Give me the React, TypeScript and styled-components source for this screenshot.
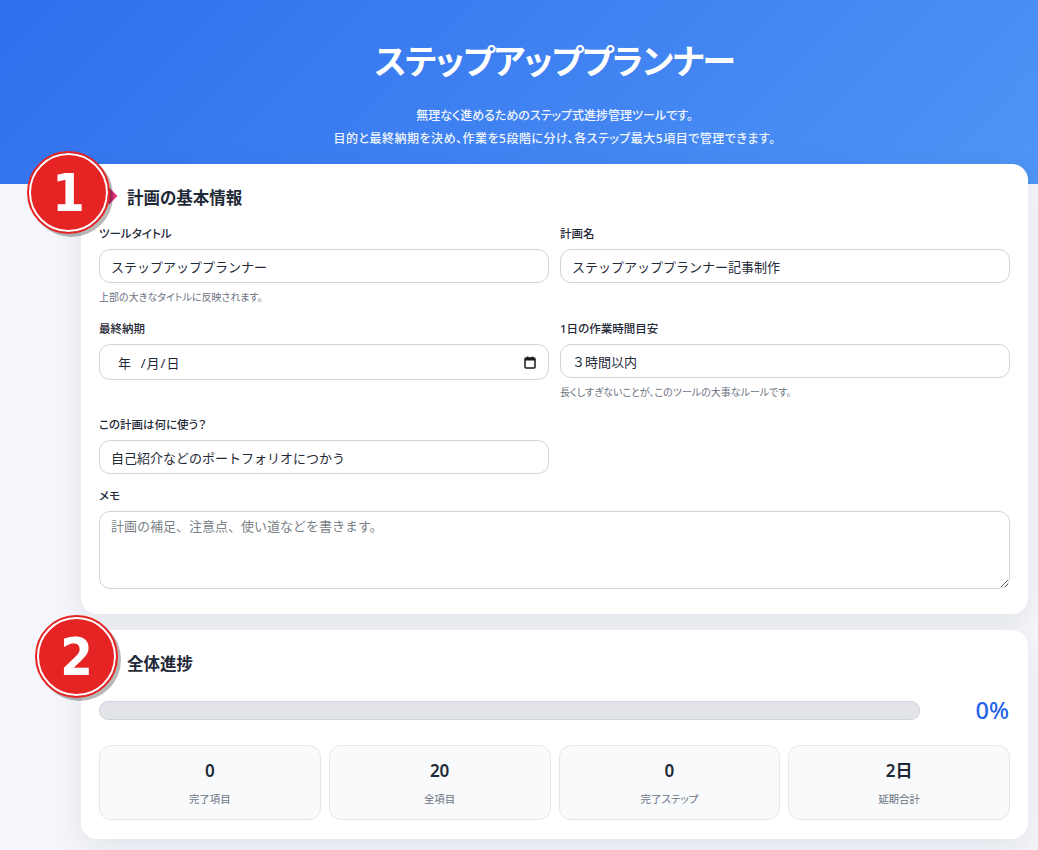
import React from 'react';
import styled, { createGlobalStyle } from 'styled-components';

const FONT = '"Noto Sans", "Noto Sans CJK JP", sans-serif';

const GlobalStyle = createGlobalStyle`
  * { box-sizing: border-box; }
  html, body { margin: 0; height: 850px; overflow: hidden; }
  body { background: #f4f6fb; color: #1f2937; font-family: ${FONT}; }
`;

const Hero = styled.header`
  height: 184px;
  padding: 36px 10px 0 81px;
  background: linear-gradient(135deg, #2f6fed 0%, #4f94f5 100%);
  color: #fff;
  text-align: center;
`;

const Title = styled.h1`
  margin: 0 0 18px;
  font-size: 34px;
  line-height: 50px;
  font-weight: 600;
  letter-spacing: -1.1px;
  font-feature-settings: 'palt';
`;

const Lead = styled.p<{ $tracking?: number }>`
  margin: 0;
  font-size: 12px;
  line-height: 23px;
  font-weight: 500;
  letter-spacing: ${(p) => p.$tracking ?? 0}px;
  color: #f1f6ff;
  font-feature-settings: 'palt';
`;

const Main = styled.main`
  display: flex;
  flex-direction: column;
  gap: 16px;
  margin-top: -20px;
  padding: 0 10px 0 81px;
`;

const Card = styled.section<{ $bottom: number }>`
  position: relative;
  padding: 18px 18px ${(p) => p.$bottom}px;
  background: #fff;
  border-radius: 16px;
  box-shadow: 0 10px 30px rgba(15, 23, 42, 0.08);
`;

const Badge = styled.span<{ $left: number; $top: number }>`
  position: absolute;
  left: ${(p) => p.$left}px;
  top: ${(p) => p.$top}px;
  z-index: 2;
  display: flex;
  align-items: center;
  justify-content: center;
  width: 79px;
  height: 79px;
  border-radius: 50%;
  background: #e62424;
  border: 2px solid #fff;
  outline: 2px solid #e62424;
  box-shadow: 3px 3px 0 2px rgba(0, 0, 0, 0.28);
  color: #fff;
  font-family: 'DejaVu Sans', sans-serif;
  font-stretch: condensed;
  font-size: 52px;
  line-height: 1;
  font-weight: 700;
`;

const CardTitle = styled.h2<{ $gap: number }>`
  position: relative;
  margin: 0 0 ${(p) => p.$gap}px 28px;
  font-size: 16.5px;
  line-height: 32px;
  font-weight: 600;
  color: #1f2937;
  font-feature-settings: 'palt';

  &::before {
    content: '';
    position: absolute;
    left: -24px;
    top: 8px;
    width: 12px;
    height: 12px;
    background: #e0357a;
    transform: rotate(45deg);
  }
`;

const FormGrid = styled.div`
  display: grid;
  grid-template-columns: 1fr 1fr;
  column-gap: 11px;
`;

const Field = styled.div<{ $wide?: boolean; $height: number }>`
  grid-column: ${(p) => (p.$wide ? '1 / -1' : 'auto')};
  height: ${(p) => p.$height}px;
`;

const Label = styled.label`
  display: block;
  height: 23px;
  font-size: 11.5px;
  line-height: 16px;
  font-weight: 500;
  color: #1f2937;
  font-feature-settings: 'palt';
`;

const inputBase = `
  display: block;
  width: 100%;
  border: 1px solid #d1d5db;
  border-radius: 11px;
  background: #fff;
  color: #1f2937;
  font-family: ${FONT};
  font-size: 13px;
  padding: 0 11px;
  outline: none;
`;

const TextInput = styled.input`
  ${inputBase}
  height: 34px;
`;

const DateBox = styled.div`
  ${inputBase}
  display: flex;
  align-items: center;
  justify-content: space-between;
  height: 36px;
  padding: 0 12px 0 18px;
`;

const DateParts = styled.span`
  white-space: pre;
  letter-spacing: 1px;
`;

const MemoArea = styled.textarea`
  ${inputBase}
  height: 78px;
  padding-top: 5px;
  line-height: 18px;
  resize: vertical;

  &::placeholder {
    color: #7a7f87;
  }
`;

const Help = styled.p`
  margin: 7px 0 0;
  font-size: 10px;
  line-height: 15px;
  color: #6b7280;
  font-feature-settings: 'palt';
`;

const ProgressRow = styled.div`
  display: grid;
  grid-template-columns: 1fr 79px;
  column-gap: 11px;
  align-items: center;
  margin-bottom: 21px;
`;

const Track = styled.div`
  height: 19px;
  background: #e2e4e9;
  border: 1px solid #d1d5db;
  border-radius: 9px;
  overflow: hidden;
`;

const Fill = styled.div`
  height: 100%;
  background: #2563eb;
`;

const Percent = styled.div`
  padding-right: 1px;
  font-size: 23.5px;
  line-height: 28px;
  font-weight: 500;
  color: #2563eb;
  text-align: right;
`;

const Stats = styled.div`
  display: grid;
  grid-template-columns: repeat(4, 1fr);
  gap: 8px;
`;

const Stat = styled.div`
  height: 75px;
  padding-top: 12px;
  background: #f8fafc;
  border: 1px solid #e5e7eb;
  border-radius: 12px;
  text-align: center;
`;

const StatValue = styled.div`
  font-size: 17px;
  line-height: 26px;
  font-weight: 600;
  color: #1f2937;
`;

const StatLabel = styled.div`
  margin-top: 8px;
  font-size: 10.5px;
  line-height: 15px;
  color: #6b7280;
  font-feature-settings: 'palt';
`;

const CalendarIcon = () => (
  <svg width="12" height="13" viewBox="0 0 12 13" aria-hidden="true">
    <rect x="1" y="2" width="10" height="10" rx="1" fill="none" stroke="#1a1a1a" strokeWidth="1.5" />
    <rect x="1" y="2" width="10" height="2.5" fill="#1a1a1a" />
    <rect x="3" y="0.5" width="1.4" height="2" fill="#1a1a1a" />
    <rect x="7.6" y="0.5" width="1.4" height="2" fill="#1a1a1a" />
  </svg>
);

const stats = [
  { value: '0', label: '完了項目' },
  { value: '20', label: '全項目' },
  { value: '0', label: '完了ステップ' },
  { value: '2日', label: '延期合計' },
];

export default function App() {
  const progress = 0;
  return (
    <>
      <GlobalStyle />
      <Hero>
        <Title>ステップアッププランナー</Title>
        <Lead>無理なく進めるためのステップ式進捗管理ツールです。</Lead>
        <Lead $tracking={0.5}>目的と最終納期を決め、作業を5段階に分け、各ステップ最大5項目で管理できます。</Lead>
      </Hero>
      <Main>
        <Card $bottom={25}>
          <Badge $left={-52} $top={-11}>1</Badge>
          <CardTitle $gap={12}>計画の基本情報</CardTitle>
          <FormGrid>
            <Field $height={95}>
              <Label>ツールタイトル</Label>
              <TextInput defaultValue="ステップアッププランナー" />
              <Help>上部の大きなタイトルに反映されます。</Help>
            </Field>
            <Field $height={95}>
              <Label>計画名</Label>
              <TextInput defaultValue="ステップアッププランナー記事制作" />
            </Field>
            <Field $height={96}>
              <Label>最終納期</Label>
              <DateBox>
                <DateParts>年  /月/日</DateParts>
                <CalendarIcon />
              </DateBox>
            </Field>
            <Field $height={96}>
              <Label>1日の作業時間目安</Label>
              <TextInput defaultValue="３時間以内" />
              <Help>長くしすぎないことが、このツールの大事なルールです。</Help>
            </Field>
            <Field $height={71}>
              <Label>この計画は何に使う？</Label>
              <TextInput defaultValue="自己紹介などのポートフォリオにつかう" />
            </Field>
            <Field $height={71} />
            <Field $wide $height={101}>
              <Label>メモ</Label>
              <MemoArea placeholder="計画の補足、注意点、使い道などを書きます。" />
            </Field>
          </FormGrid>
        </Card>
        <Card $bottom={19}>
          <Badge $left={-44} $top={-13}>2</Badge>
          <CardTitle $gap={16}>全体進捗</CardTitle>
          <ProgressRow>
            <Track>
              <Fill style={{ width: `${progress}%` }} />
            </Track>
            <Percent>{progress}%</Percent>
          </ProgressRow>
          <Stats>
            {stats.map((s) => (
              <Stat key={s.label}>
                <StatValue>{s.value}</StatValue>
                <StatLabel>{s.label}</StatLabel>
              </Stat>
            ))}
          </Stats>
        </Card>
      </Main>
    </>
  );
}
